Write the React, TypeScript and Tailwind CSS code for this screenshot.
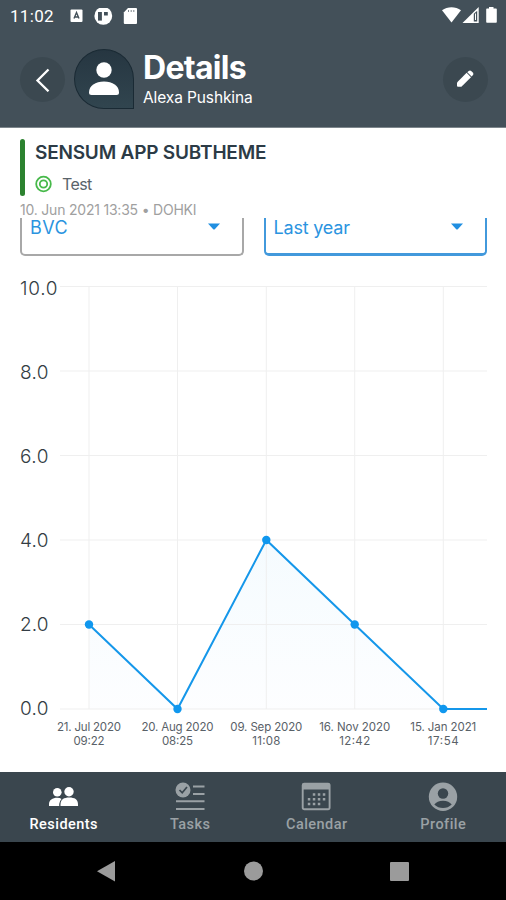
import type { ReactNode } from 'react';

const points = [
  { x: 89, value: 2, date: '21. Jul 2020', time: '09:22', width: 64 },
  { x: 177.5, value: 0, date: '20. Aug 2020', time: '08:25', width: 72 },
  { x: 266.3, value: 4, date: '09. Sep 2020', time: '11:08', width: 72 },
  { x: 354.7, value: 2, date: '16. Nov 2020', time: '12:42', width: 71 },
  { x: 443.3, value: 0, date: '15. Jan 2021', time: '17:54', width: 66 },
];

const ticks = [10, 8, 6, 4, 2, 0];

// chart starts 257px below the top of the screen
const toY = (value: number) => 452 - value * 42.25;

function StatusBar() {
  return (
    <div className="flex h-8 items-center pl-[10px] pr-[8px] text-white">
      <span className="w-[60px] font-['Roboto'] text-[17px] leading-8 tracking-[0.3px]">11:02</span>
      <svg className="mt-px" width="68" height="18" viewBox="0 0 68 18">
        <rect x="0.5" y="1.5" width="12" height="12.5" rx="1" fill="#fff" />
        <path d="M4 10.5 6.5 4.5 9 10.5M4.8 9H8.2" fill="none" stroke="#435059" strokeWidth="1.4" />
        <circle cx="33.3" cy="7.9" r="8.9" fill="#fff" />
        <path d="M28 4h3.9v8.600H28z" fill="#435059" />
        <path d="M34 4h3.8v3.500H34z" fill="#435059" />
        <path d="M58 0h8a1 1 0 0 1 1 1v14a1 1 0 0 1-1 1H54.8a1 1 0 0 1-1-1V4.500z" fill="#fff" />
        <path d="M58.5 2v2M61.2 2v2M63.8 2v2" stroke="#435059" strokeWidth=".7" />
      </svg>
      <svg className="ml-auto" width="56" height="18" viewBox="0 0 56 18">
        <path d="M0 3.300C5.500-.8 13.500-.8 19 3.300L9.500 15.500z" fill="#fff" />
        <path d="M36.700 0v16H20.500z" fill="#fff" />
        <path d="M31.800 6.800 35.200 3.800v10.700h-3.400z" fill="#435059" />
        <path d="M33.500 6.500v6.500" stroke="#fff" strokeWidth="1" />
        <path d="M47 0h4.500v1.500H54a.8.8 0 0 1 .8.8V15a.8.8 0 0 1-.8.8h-9a.8.8 0 0 1-.8-.8V2.300a.8.8 0 0 1 .8-.8h2z" fill="#fff" />
      </svg>
    </div>
  );
}

function Header() {
  return (
    <header className="flex h-24 items-start border-b border-[#7d868c] pl-5 pr-[18px] text-white">
      <button className="mt-[25px] flex size-[45px] items-center justify-center rounded-full bg-[#3b4850]">
        <svg width="16" height="24" viewBox="0 0 16 24" fill="none" stroke="#fff" strokeWidth="2.3">
          <path d="M13.5 1.5 2.5 12.5 13.5 23.3" />
        </svg>
      </button>
      <div className="ml-[9px] mt-[17px] flex size-[60px] items-center justify-center rounded-full rounded-br-[6px] border border-[#1a2a34] bg-linear-to-b from-[#263641] to-[#31454f]">
        <svg width="32" height="34" viewBox="0 0 32 34" fill="#fff">
          <circle cx="16" cy="8" r="7.7" />
          <path d="M1 30.500C1 23.500 7.500 19.500 16 19.500S31 23.500 31 30.500Q31 33 28.500 33H3.500Q1 33 1 30.500z" />
        </svg>
      </div>
      <div className="ml-[9px] mt-[18px] flex flex-col">
        <h1 className="font-['Inter'] text-[32px] font-bold leading-9 tracking-[-0.7px]">Details</h1>
        <p className="font-['Inter'] text-[15.5px] leading-6 tracking-[-0.11px]">Alexa Pushkina</p>
      </div>
      <button className="ml-auto mt-[25px] flex size-[45px] items-center justify-center rounded-full bg-[#3b4850]">
        <svg className="-ml-px -mt-[2px]" width="18" height="18" viewBox="0 0 18 18" fill="#fff">
          <path d="M1 12.400 10.600 2.800 15 7.200 5.400 16.800H2Q1 16.800 1 15.800z" />
          <path d="M11.300 2.300 12.700.900Q14 0 15.200.900L17 2.700Q17.900 4 17 5.100L15.600 6.500z" />
        </svg>
      </button>
    </header>
  );
}

function Theme() {
  return (
    <section className="px-5 pt-[11px] font-['Inter']">
      <div className="flex h-[57px]">
        <div className="w-[5px] rounded-sm bg-[#2c822f]" />
        <div className="ml-[10px]">
          <h2 className="text-[19px] font-semibold leading-7 tracking-[-0.2px] text-[#2c3b46]">SENSUM APP SUBTHEME</h2>
          <div className="mt-[8px] flex items-center">
            <svg width="18" height="18" viewBox="0 0 18 18" fill="none" stroke="#47b94a">
              <circle cx="8.5" cy="9" r="7.3" strokeWidth="1.8" />
              <circle cx="8.5" cy="9" r="3.7" strokeWidth="1.8" />
            </svg>
            <span className="ml-[9px] text-[16px] leading-[18px] tracking-[-0.6px] text-[#59636a]">Test</span>
          </div>
        </div>
      </div>
      <p className="h-[22px] pt-[4px] text-[14px] leading-5 tracking-[-0.21px] text-[#a0a0a0]">10. Jun 2021 13:35 • DOHKI</p>
    </section>
  );
}

function Select({ className, children }: { className: string; children: ReactNode }) {
  return (
    <div className={`flex h-[38px] flex-1 items-start justify-between rounded-b-[5px] border-t-0 pl-2 pr-[22px] text-[#2b94df] ${className}`}>
      <span className="font-['Inter'] text-[18px] leading-[20px]">{children}</span>
      <svg className="mt-[5px]" width="12" height="7" viewBox="0 0 12 7" fill="#208fe1">
        <path d="M0 .5H12L7 6Q6 7 5 6z" />
      </svg>
    </div>
  );
}

function Chart() {
  const line = points.map((p) => `${p.x},${toY(p.value)}`).join(' ');

  return (
    <svg className="mt-px block" width="506" height="515" viewBox="0 0 506 515" fontFamily="Inter, sans-serif">
      <defs>
        <linearGradient id="area" x1="0" y1="0" x2="0" y2="1">
          <stop offset="0" stopColor="#f2fafe" stopOpacity=".8" />
          <stop offset="1" stopColor="#fcfdff" stopOpacity=".7" />
        </linearGradient>
      </defs>
      <polygon points={`89,452 ${line}`} fill="url(#area)" />
      <g stroke="#efefef">
        {ticks.map((tick) => (
          <line key={tick} x1="60" x2="487" y1={toY(tick)} y2={toY(tick)} />
        ))}
        {points.map((p) => (
          <line key={p.x} x1={p.x} x2={p.x} y1={toY(10)} y2={toY(0)} />
        ))}
      </g>
      {ticks.map((tick) => (
        <text key={tick} x="20" y={457.5 - tick * 42} fontSize="19" fontWeight="300" fill="#333d44" textLength={tick === 10 ? 37.5 : 28.5}>
          {tick.toFixed(1)}
        </text>
      ))}
      <polyline points={`${line} 487,452`} fill="none" stroke="#1597ea" strokeWidth="2" />
      {points.map((p) => (
        <g key={p.x}>
          <circle cx={p.x} cy={toY(p.value)} r="4.2" fill="#1097ee" />
          <text x={p.x} y="473.5" textAnchor="middle" fontSize="11.5" fill="#596168" textLength={p.width}>{p.date}</text>
          <text x={p.x} y="488" textAnchor="middle" fontSize="11.5" fill="#596168" textLength={p.time === '11:08' ? 28 : 31}>{p.time}</text>
        </g>
      ))}
    </svg>
  );
}

function Tab({ label, active, children }: { label: string; active?: boolean; children: ReactNode }) {
  return (
    <button className={`flex flex-1 flex-col items-center pt-[10px] ${active ? 'text-white' : 'text-[#9aa1a5]'}`}>
      <svg width="30" height="30" viewBox="0 0 30 30" fill="currentColor">{children}</svg>
      <span className="mt-[4px] pl-px font-['Roboto'] text-[14.5px] font-medium leading-[18px] tracking-[0.45px]">{label}</span>
    </button>
  );
}

function TabBar() {
  return (
    <nav className="flex h-[70px] bg-[#3a464e]">
      <Tab label="Residents" active>
        <circle cx="9.3" cy="10.3" r="4.3" />
        <path d="M1 24V22.500C1 18 4.500 15.800 9.300 15.800Q12 15.800 13.500 17Q11.500 19 11.200 22V24z" />
        <circle cx="21" cy="9.7" r="4.7" />
        <path d="M12.500 24V22.500C12.500 17.500 16 15.600 21.300 15.600S30 17.500 30 22.500V24z" />
      </Tab>
      <Tab label="Tasks">
        <circle cx="8" cy="8" r="7.5" />
        <path d="M4.500 8 7.200 10.800 12 5" fill="none" stroke="#3a464e" strokeWidth="1.7" />
        <path d="M18 4.500H29.500M18 12H29.500M1 19.300H29.500M1 27H29.500" stroke="currentColor" strokeWidth="2" />
      </Tab>
      <Tab label="Calendar">
        <path d="M3 1.600H27Q28.600 1.600 28.600 3.200V25.500Q28.600 27.300 27 27.300H3.500Q1.700 27.300 1.700 25.500V3.200Q1.700 1.600 3 1.600z" fill="none" stroke="currentColor" strokeWidth="1.9" />
        <path d="M1.500 1.500H28.500V7.500H1.500z" />
        <path d="M11.800 12.500H25M6.800 17.200H25M6.800 22H20" stroke="currentColor" strokeWidth="2.5" strokeDasharray="2.5 2.5" />
      </Tab>
      <Tab label="Profile">
        <circle cx="15" cy="14.7" r="14.2" />
        <circle cx="15" cy="11.5" r="5.2" fill="#3a464e" />
        <path d="M6.300 22.500Q9 18.700 15 18.700T23.700 22.500Q20 26 15 26T6.300 22.500z" fill="#3a464e" />
      </Tab>
    </nav>
  );
}

function SystemNav() {
  return (
    <div className="flex h-[58px] items-start bg-black px-[97px] pt-[19px]">
      <svg className="w-full" height="21" viewBox="0 0 312 21" fill="#9b9b9b">
        <path d="M0 10.300 18 0V20.500z" />
        <circle cx="156.5" cy="10" r="9.5" />
        <rect x="293" y="1" width="19" height="19" rx="1" />
      </svg>
    </div>
  );
}

function App() {
  return (
    <div className="flex h-[900px] w-[506px] flex-col overflow-hidden bg-white">
      <div className="bg-[#435059]">
        <StatusBar />
        <Header />
      </div>
      <main className="flex-1">
        <Theme />
        <div className="flex gap-5 pl-5 pr-[19px]">
          <Select className="border-2 border-[#a8a8a8] tracking-[0.5px]">BVC</Select>
          <Select className="border-2 border-b-3 border-[#4299dc] tracking-[-0.2px]">Last year</Select>
        </div>
        <Chart />
      </main>
      <TabBar />
      <SystemNav />
    </div>
  );
}

export default App;
